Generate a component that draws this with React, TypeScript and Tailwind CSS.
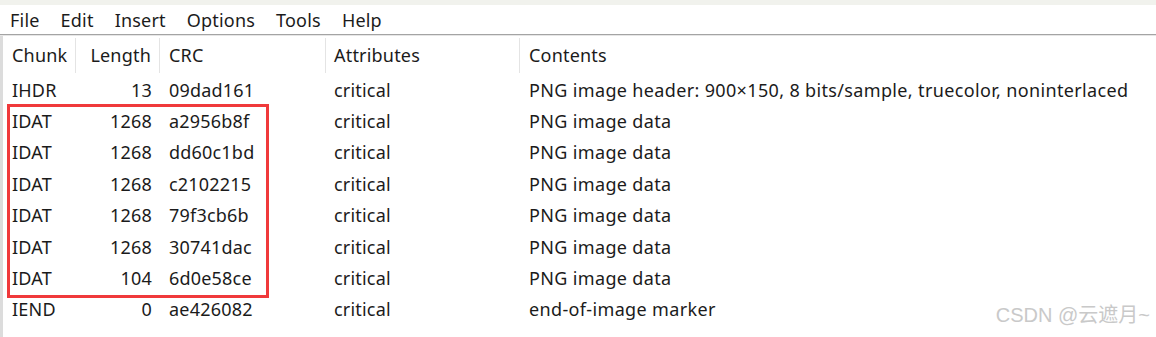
import React from 'react';

const ROWS = [
  { chunk: 'IHDR', length: '13', crc: '09dad161', attr: 'critical', contents: 'PNG image header: 900×150, 8 bits/sample, truecolor, noninterlaced' },
  { chunk: 'IDAT', length: '1268', crc: 'a2956b8f', attr: 'critical', contents: 'PNG image data' },
  { chunk: 'IDAT', length: '1268', crc: 'dd60c1bd', attr: 'critical', contents: 'PNG image data' },
  { chunk: 'IDAT', length: '1268', crc: 'c2102215', attr: 'critical', contents: 'PNG image data' },
  { chunk: 'IDAT', length: '1268', crc: '79f3cb6b', attr: 'critical', contents: 'PNG image data' },
  { chunk: 'IDAT', length: '1268', crc: '30741dac', attr: 'critical', contents: 'PNG image data' },
  { chunk: 'IDAT', length: '104', crc: '6d0e58ce', attr: 'critical', contents: 'PNG image data' },
  { chunk: 'IEND', length: '0', crc: 'ae426082', attr: 'critical', contents: 'end-of-image marker' },
];

const MENU = ['File', 'Edit', 'Insert', 'Options', 'Tools', 'Help'];

const cols = 'grid grid-cols-[73px_84px_166px_194px_1fr]';

export default function App() {
  return (
    <div
      className="relative w-[1156px] h-[337px] overflow-hidden bg-white text-[#1b1b1b] text-[18px] tracking-[0.2px]"
      style={{ fontFamily: '"Noto Sans", "Noto Sans CJK SC", sans-serif' }}
    >
      <div className="h-[5px] bg-[#f1f2ed]" />

      {/* menu bar */}
      <div className="flex items-center h-[29px] pl-[10px] gap-[21px] leading-none">
        {MENU.map((m) => (
          <span key={m}>{m}</span>
        ))}
      </div>
      <div className="h-[1px] bg-[#a4a4a4]" />
      <div className="h-[1px] bg-[#e6e6e6]" />

      <div className="border-l-[3px] border-[#dcdcdc] h-full">
        {/* header */}
        <div className={`${cols} h-[38px] items-center`}>
          <div className="pl-[9px] border-r border-[#e4e4e4] h-[35px] flex items-center">Chunk</div>
          <div className="pr-[8px] border-r border-[#e4e4e4] h-[35px] flex items-center justify-end">Length</div>
          <div className="pl-[9px] border-r border-[#e4e4e4] h-[35px] flex items-center">CRC</div>
          <div className="pl-[8px] border-r border-[#e4e4e4] h-[35px] flex items-center">Attributes</div>
          <div className="pl-[9px] h-[35px] flex items-center">Contents</div>
        </div>

        {/* rows */}
        {ROWS.map((r, i) => (
          <div key={i} className={`${cols} h-[31.4px] items-center leading-none`}>
            <div className="pl-[9px]">{r.chunk}</div>
            <div className="pr-[8px] text-right">{r.length}</div>
            <div className="pl-[9px]">{r.crc}</div>
            <div className="pl-[8px]">{r.attr}</div>
            <div className="pl-[9px] whitespace-nowrap tracking-[0.35px]">{r.contents}</div>
          </div>
        ))}
      </div>

      {/* red highlight box */}
      <div className="absolute left-[7px] top-[104px] w-[262px] h-[194px] border-[3px] border-[#f0393b]" />

      {/* watermark */}
      <div
        className="absolute right-[6px] bottom-[7px] text-[20px] tracking-normal text-[#c9c9c9]"
        style={{ fontFamily: '"Liberation Sans", "Noto Sans CJK SC", sans-serif' }}
      >
        CSDN @云遮月~
      </div>
    </div>
  );
}
